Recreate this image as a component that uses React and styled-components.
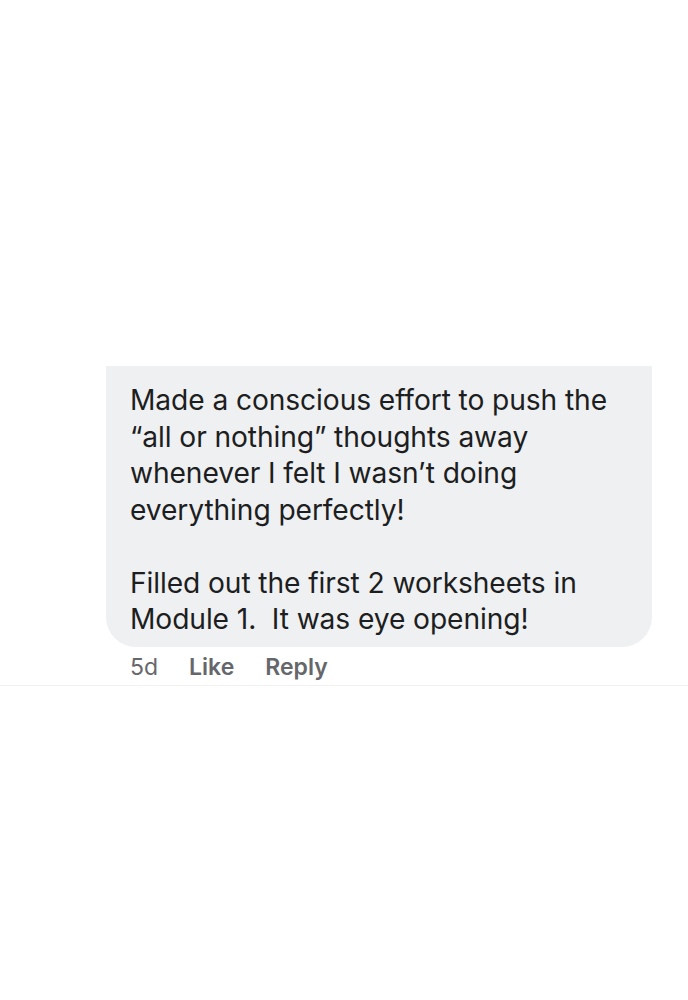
import React from "react";
import styled, { createGlobalStyle } from "styled-components";

const GlobalStyle = createGlobalStyle`
  html, body {
    margin: 0;
    padding: 0;
    background: #ffffff;
  }
  body {
    font-family: Inter, "Liberation Sans", Arial, sans-serif;
    -webkit-font-smoothing: antialiased;
  }
`;

const Page = styled.div`
  width: 688px;
  height: 1000px;
  padding-top: 366px;
  box-sizing: border-box;
`;

const Thread = styled.div`
  border-bottom: 1px solid #f1f1f2;
`;

const Comment = styled.div`
  margin-left: 106px;
  width: 546px;
  display: flex;
  flex-direction: column;
`;

const Bubble = styled.div`
  background: #eff0f2;
  border-radius: 0 0 30px 30px;
  padding: 16px 20px 9px 24px;
  color: #1c1e21;
  font-size: 28.2px;
  line-height: 36.5px;
  letter-spacing: -0.1px;
`;

const Paragraph = styled.p`
  margin: 0;
  white-space: pre-line;
  & + & {
    margin-top: 36.5px;
  }
`;

const Actions = styled.div`
  display: flex;
  align-items: center;
  gap: 31px;
  padding-left: 24px;
  height: 36px;
  margin-top: 2px;
  font-size: 23px;
  color: #65676b;
`;

const Action = styled.span`
  font-weight: ${(p) => (p.$bold ? 600 : 400)};
`;

export default function App() {
  return (
    <Page>
      <GlobalStyle />
      <Thread>
        <Comment>
          <Bubble>
            <Paragraph>
              {"Made a conscious effort to push the\n\u201Call or nothing\u201D thoughts away\nwhenever I felt I wasn\u2019t doing\neverything perfectly!"}
            </Paragraph>
            <Paragraph>
              {"Filled out the first 2 worksheets in\nModule 1.\u00A0 It was eye opening!"}
            </Paragraph>
          </Bubble>
          <Actions>
            <Action>5d</Action>
            <Action $bold>Like</Action>
            <Action $bold>Reply</Action>
          </Actions>
        </Comment>
      </Thread>
    </Page>
  );
}
